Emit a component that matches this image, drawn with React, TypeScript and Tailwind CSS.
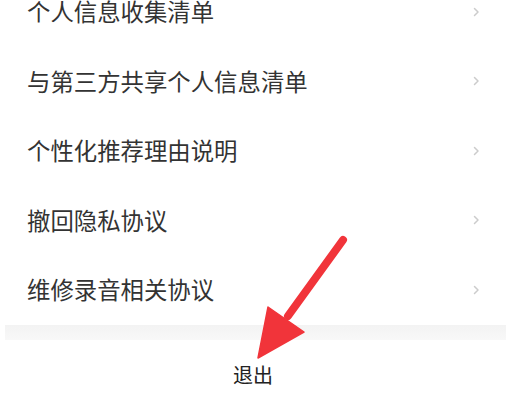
const items = [
  "个人信息收集清单",
  "与第三方共享个人信息清单",
  "个性化推荐理由说明",
  "撤回隐私协议",
  "维修录音相关协议",
];

const Chevron = () => (
  <svg width="8" height="12" viewBox="0 0 8 12" className="shrink-0">
    <path d="M2.5 2.5 L6 6 L2.5 9.5" fill="none" stroke="#cccccc" strokeWidth="1.5" strokeLinecap="round" strokeLinejoin="round" />
  </svg>
);

const App = () => {
  return (
    <div
      className="relative w-[506px] h-[408px] overflow-hidden bg-white"
      style={{ fontFamily: '"Noto Sans CJK SC", "Noto Sans", sans-serif' }}
    >
      <div className="mt-[-23px]">
        {items.map((item) => (
          <div key={item} className="flex items-center justify-between h-[69.5px] pl-[27px] pr-[26px]">
            <span className="text-[23.4px] leading-none text-[#333333]">{item}</span>
            <Chevron />
          </div>
        ))}
      </div>

      {/* divider band */}
      <div className="ml-[5px] h-[15px] bg-gradient-to-b from-[#f3f3f3] to-[#f8f8f8]" />

      <div className="flex items-center justify-center h-[70px]">
        <span className="text-[20px] leading-none text-[#222222]">退出</span>
      </div>

      {/* red annotation arrow */}
      <svg className="absolute inset-0 pointer-events-none" width="506" height="408" viewBox="0 0 506 408">
        <line x1="343" y1="240" x2="288" y2="316" stroke="#f1343a" strokeWidth="8" strokeLinecap="round" />
        <polygon points="258,358 268,307 304,332" fill="#f1343a" stroke="#f1343a" strokeWidth="1.5" strokeLinejoin="round" />
      </svg>
    </div>
  );
};

export default App;
